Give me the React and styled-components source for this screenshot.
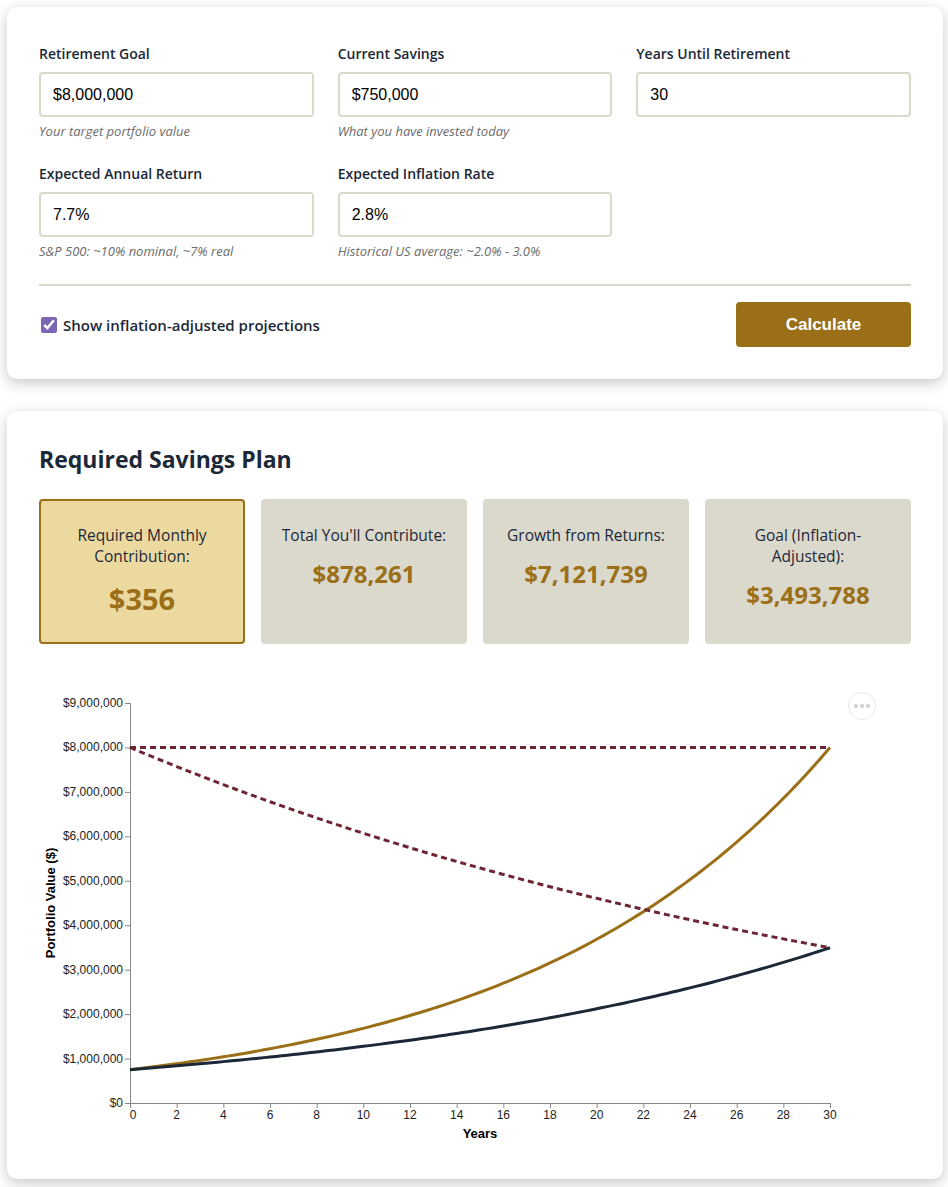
import React from 'react'
import styled, { createGlobalStyle } from 'styled-components'

const colors = {
  navy: '#1b2838',
  gold: '#9b6f17',
  goldLight: '#ecd9a0',
  stone: '#dbd8cc',
  maroon: '#6e2533',
  hint: '#6b6b6b',
}

const GlobalStyle = createGlobalStyle`
  body {
    margin: 0;
    background: #ffffff;
    font-family: "Open Sans", "Noto Sans", sans-serif;
    color: ${colors.navy};
  }
`

const Page = styled.div`
  padding: 7px 5px 9px 7px;
  display: flex;
  flex-direction: column;
  gap: 32px;
`

const Card = styled.section`
  background: #fff;
  border-radius: 10px;
  box-shadow: 0 4px 14px rgba(0, 0, 0, 0.22);
  padding: ${(p) => p.$pad || '32px'};
`

const FieldGrid = styled.div`
  display: grid;
  grid-template-columns: repeat(3, 1fr);
  column-gap: 24px;
  row-gap: 23px;
`

const Field = styled.div`
  display: flex;
  flex-direction: column;
`

const Label = styled.label`
  font-size: 14px;
  font-weight: 600;
  line-height: 22px;
  margin-bottom: 7px;
`

const Input = styled.input`
  box-sizing: border-box;
  height: 45px;
  width: 100%;
  padding: 0 12px;
  border: 2px solid ${colors.stone};
  border-radius: 4px;
  font-family: Arial, "Liberation Sans", sans-serif;
  font-size: 16px;
  color: #000;
  outline: none;
`

const Hint = styled.div`
  margin-top: 5px;
  font-size: 13px;
  line-height: 18px;
  font-style: italic;
  color: ${colors.hint};
`

const Divider = styled.hr`
  border: none;
  border-top: 2px solid ${colors.stone};
  margin: 24px 0 0;
`

const ActionRow = styled.div`
  display: flex;
  align-items: center;
  justify-content: space-between;
  margin-top: 16px;
`

const CheckLabel = styled.label`
  display: flex;
  align-items: center;
  gap: 6px;
  font-size: 15px;
  font-weight: 600;
`

const Checkbox = styled.input`
  width: 16px;
  height: 16px;
  margin: 0 0 0 2px;
  accent-color: #7a66b3;
`

const CalcButton = styled.button`
  width: 175px;
  height: 45px;
  border: none;
  border-radius: 4px;
  background: ${colors.gold};
  color: #fff;
  font-family: Arial, "Liberation Sans", sans-serif;
  font-size: 17px;
  font-weight: 700;
`

const Heading = styled.h2`
  margin: 2px 0 26px;
  font-size: 23px;
  line-height: 28px;
  font-weight: 700;
`

const StatGrid = styled.div`
  display: grid;
  grid-template-columns: repeat(4, 1fr);
  gap: 16px;
`

const StatBox = styled.div`
  box-sizing: border-box;
  padding: 24px 16px;
  border-radius: 4px;
  text-align: center;
  background: ${(p) => (p.$highlight ? colors.goldLight : colors.stone)};
  border: 2px solid ${(p) => (p.$highlight ? colors.gold : colors.stone)};
`

const StatLabel = styled.div`
  font-size: 15.5px;
  line-height: 21px;
  font-weight: 500;
  margin-bottom: 12px;
`

const StatValue = styled.div`
  color: ${colors.gold};
  font-weight: 700;
  font-size: ${(p) => (p.$big ? '29px' : '24px')};
  line-height: ${(p) => (p.$big ? '39px' : '31px')};
`

const ChartWrap = styled.div`
  position: relative;
  margin-top: 32px;
`

const ActionsButton = styled.div`
  position: absolute;
  top: 16px;
  right: 35px;
  width: 26px;
  height: 26px;
  border: 1px solid #e8e8e8;
  border-radius: 50%;
  display: flex;
  align-items: center;
  justify-content: center;
  gap: 2px;
`

const Dot = styled.span`
  width: 4px;
  height: 4px;
  border-radius: 50%;
  background: #cfcfcf;
`

// projection maths
const GOAL = 8000000
const START = 750000
const YEARS = 30
const RET = 0.077
const INFL = 0.028
const mi = RET / 12
const growth = Math.pow(1 + mi, YEARS * 12)
const monthly = (GOAL - START * growth) / ((growth - 1) / mi)

const nominalAt = (t) => {
  const g = Math.pow(1 + mi, t * 12)
  return START * g + (monthly * (g - 1)) / mi
}
const deflate = (t) => Math.pow(1 + INFL, t)

const W = 872
const H = 471
const X0 = 91
const X1 = 791
const Y0 = 427
const Y1 = 27
const YMAX = 9000000

const sx = (t) => X0 + (t / YEARS) * (X1 - X0)
const sy = (v) => Y0 - (v / YMAX) * (Y0 - Y1)

const buildPath = (fn) => {
  const pts = []
  for (let m = 0; m <= YEARS * 12; m += 3) {
    const t = m / 12
    pts.push(`${sx(t).toFixed(2)},${sy(fn(t)).toFixed(2)}`)
  }
  return 'M' + pts.join('L')
}

const money = (v) => '$' + Math.round(v).toLocaleString('en-US')

const yTicks = Array.from({ length: 10 }, (_, i) => i * 1000000)
const xTicks = Array.from({ length: 16 }, (_, i) => i * 2)

const axisText = {
  fontFamily: 'Arial, "Liberation Sans", sans-serif',
  fontSize: 12,
  fill: '#222',
}

function ProjectionChart() {
  return (
    <svg width={W} height={H} viewBox={`0 0 ${W} ${H}`} style={{ display: 'block' }}>
      <g stroke='#888' strokeWidth='1' fill='none'>
        <line x1={X0 + 0.5} y1={Y1} x2={X0 + 0.5} y2={Y0} />
        <line x1={X0} y1={Y0 + 0.5} x2={X1} y2={Y0 + 0.5} />
        {yTicks.map((v) => (
          <line key={v} x1={X0 - 5} x2={X0} y1={sy(v) + 0.5} y2={sy(v) + 0.5} />
        ))}
        {xTicks.map((t) => (
          <line key={t} x1={sx(t) + 0.5} x2={sx(t) + 0.5} y1={Y0} y2={Y0 + 5} />
        ))}
      </g>
      {yTicks.map((v) => (
        <text key={v} x={X0 - 7} y={sy(v) + 4} textAnchor='end' {...axisText}>
          {money(v)}
        </text>
      ))}
      {xTicks.map((t) => (
        <text key={t} x={sx(t) + (t === 0 ? 3 : 0)} y={Y0 + 16} textAnchor='middle' {...axisText}>
          {t}
        </text>
      ))}
      <text x={(X0 + X1) / 2} y={Y0 + 35} textAnchor='middle' {...axisText} fill='#000' fontSize='13' fontWeight='700'>
        Years
      </text>
      <text
        transform={`translate(16 ${(Y0 + Y1) / 2}) rotate(-90)`}
        textAnchor='middle'
        {...axisText}
        fill='#000'
        fontSize='13'
        fontWeight='700'
      >
        Portfolio Value ($)
      </text>

      <g fill='none' strokeWidth='3'>
        <path d={buildPath(nominalAt)} stroke={colors.gold} />
        <path d={buildPath((t) => nominalAt(t) / deflate(t))} stroke={colors.navy} />
        <path d={buildPath(() => GOAL)} stroke={colors.maroon} strokeDasharray='6,4' />
        <path d={buildPath((t) => GOAL / deflate(t))} stroke={colors.maroon} strokeDasharray='6,4' />
      </g>
    </svg>
  )
}

const fields = [
  { label: 'Retirement Goal', value: '$8,000,000', hint: 'Your target portfolio value' },
  { label: 'Current Savings', value: '$750,000', hint: 'What you have invested today' },
  { label: 'Years Until Retirement', value: '30' },
  { label: 'Expected Annual Return', value: '7.7%', hint: 'S&P 500: ~10% nominal, ~7% real' },
  { label: 'Expected Inflation Rate', value: '2.8%', hint: 'Historical US average: ~2.0% - 3.0%' },
]

export default function App() {
  const totalIn = START + monthly * YEARS * 12

  return (
    <Page>
      <GlobalStyle />
      <Card $pad='36px 32px 32px'>
        <FieldGrid>
          {fields.map((f) => (
            <Field key={f.label}>
              <Label>{f.label}</Label>
              <Input type='text' defaultValue={f.value} />
              {f.hint && <Hint>{f.hint}</Hint>}
            </Field>
          ))}
        </FieldGrid>
        <Divider />
        <ActionRow>
          <CheckLabel>
            <Checkbox type='checkbox' defaultChecked />
            Show inflation-adjusted projections
          </CheckLabel>
          <CalcButton>Calculate</CalcButton>
        </ActionRow>
      </Card>

      <Card>
        <Heading>Required Savings Plan</Heading>
        <StatGrid>
          <StatBox $highlight>
            <StatLabel>Required Monthly Contribution:</StatLabel>
            <StatValue $big>{money(monthly)}</StatValue>
          </StatBox>
          <StatBox>
            <StatLabel>Total You'll Contribute:</StatLabel>
            <StatValue>{money(totalIn)}</StatValue>
          </StatBox>
          <StatBox>
            <StatLabel>Growth from Returns:</StatLabel>
            <StatValue>{money(GOAL - totalIn)}</StatValue>
          </StatBox>
          <StatBox>
            <StatLabel>Goal (Inflation-Adjusted):</StatLabel>
            <StatValue>{money(GOAL / deflate(YEARS))}</StatValue>
          </StatBox>
        </StatGrid>
        <ChartWrap>
          <ProjectionChart />
          <ActionsButton>
            <Dot />
            <Dot />
            <Dot />
          </ActionsButton>
        </ChartWrap>
      </Card>
    </Page>
  )
}
